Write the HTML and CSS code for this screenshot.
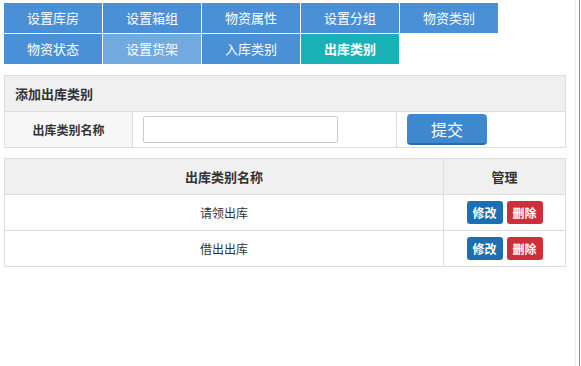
FILE: index.html
```html
<!DOCTYPE html>
<html lang="zh-CN">
<head>
  <meta charset="UTF-8" />
  <title>出库类别</title>
  <link rel="stylesheet" href="styles.css">
</head>
<body>
  <div class="page">
    <ul class="tabs">
      <li><a href="#">设置库房</a></li>
      <li><a href="#">设置箱组</a></li>
      <li><a href="#">物资属性</a></li>
      <li><a href="#">设置分组</a></li>
      <li><a href="#">物资类别</a></li>
      <li><a href="#">物资状态</a></li>
      <li class="hover"><a href="#">设置货架</a></li>
      <li><a href="#">入库类别</a></li>
      <li class="active"><a href="#">出库类别</a></li>
    </ul>

    <table class="box form-box">
      <tr>
        <th colspan="3" class="box-title">添加出库类别</th>
      </tr>
      <tr>
        <td class="label">出库类别名称</td>
        <td class="field"><input type="text"></td>
        <td class="submit"><button class="btn-submit">提交</button></td>
      </tr>
    </table>

    <table class="box list">
      <tr>
        <th>出库类别名称</th>
        <th class="col-op">管理</th>
      </tr>
      <tr>
        <td>请领出库</td>
        <td class="col-op"><a class="btn edit" href="#">修改</a><a class="btn del" href="#">删除</a></td>
      </tr>
      <tr>
        <td>借出出库</td>
        <td class="col-op"><a class="btn edit" href="#">修改</a><a class="btn del" href="#">删除</a></td>
      </tr>
    </table>
  </div>
</body>
</html>
```

FILE: styles.css
```css
html, body {
  margin: 0;
  padding: 0;
  background: #fff;
}
body {
  width: 579px;
  min-height: 366px;
  border-right: 1px solid #8c8c8c;
  font-family: "Noto Sans CJK SC", "Liberation Sans", sans-serif;
  font-size: 12px;
  color: #333;
}
.page {
  width: 576px;
  min-height: 366px;
  padding: 3px 0 0 4px;
  box-sizing: border-box;
  border-right: 1px solid #eee;
}

.tabs {
  list-style: none;
  margin: 0;
  padding: 0;
  width: 494px;
  display: flex;
  flex-wrap: wrap;
  gap: 1px;
}
.tabs li {
  width: 98px;
  height: 30px;
  background: #4a90d6;
}
.tabs li a {
  display: block;
  line-height: 30px;
  text-align: center;
  color: #fff;
  font-size: 13px;
  text-decoration: none;
}
.tabs li.hover {
  background: #72a9df;
}
.tabs li.active {
  background: #17b1b6;
}
.tabs li.active a {
  font-weight: bold;
}

.box {
  width: 562px;
  border-collapse: collapse;
  border: 1px solid #ddd;
}
.box th,
.box td {
  border: 1px solid #ddd;
  height: 35px;
  padding: 0;
}
.box th {
  background: #f0f0f0;
  font-size: 13px;
  font-weight: bold;
  color: #333;
}

.form-box {
  margin-top: 11px;
}
.form-box .box-title {
  text-align: left;
  padding-left: 10px;
}
.form-box .label {
  width: 127px;
  background: #f7f7f7;
  text-align: center;
  font-weight: bold;
}
.form-box .field {
  width: 253px;
  padding-left: 10px;
}
.form-box input {
  width: 195px;
  height: 27px;
  box-sizing: border-box;
  border: 1px solid #ccc;
  border-radius: 2px;
  display: block;
}
.form-box .submit {
  padding-left: 10px;
}
.btn-submit {
  display: block;
  width: 80px;
  height: 31px;
  background: #3d88cf;
  border: none;
  border-bottom: 2px solid #2b6cae;
  border-radius: 4px;
  color: #fff;
  font-size: 16px;
  font-weight: normal;
  font-family: inherit;
  padding: 0;
}

.list {
  margin-top: 10px;
}
.list td {
  text-align: center;
}
.list .col-op {
  width: 121px;
}
.btn {
  display: inline-block;
  width: 36px;
  height: 23px;
  line-height: 23px;
  margin: 0 2px;
  border-radius: 3px;
  color: #fff;
  font-size: 12px;
  font-weight: bold;
  text-decoration: none;
  vertical-align: middle;
}
.btn.edit {
  background: #1d6fb4;
}
.btn.del {
  background: #cf2f3c;
}
```
